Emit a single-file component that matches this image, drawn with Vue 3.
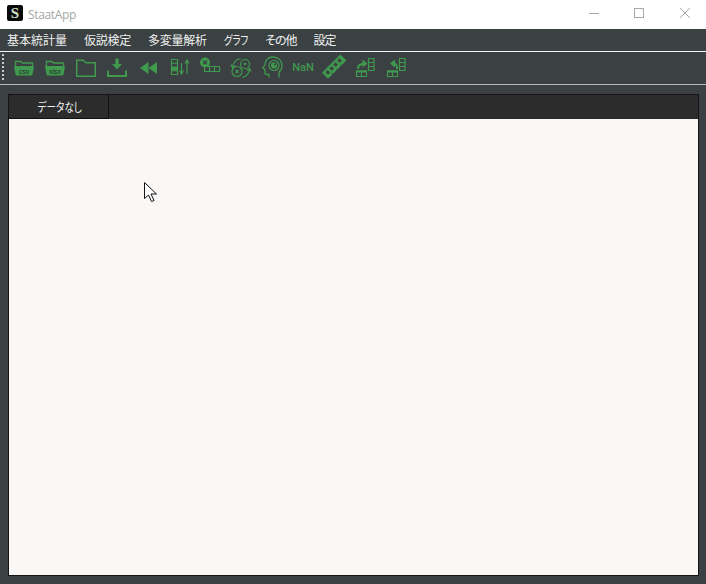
<script setup>
const menus = [
  { label: '基本統計量', cls: '' },
  { label: '仮説検定', cls: 'tight-1' },
  { label: '多変量解析', cls: 'tight-1' },
  { label: 'グラフ', cls: 'narrow' },
  { label: 'その他', cls: 'tight-2' },
  { label: '設定', cls: 'tight-2' },
]
</script>

<template>
  <div class="window">
    <header class="titlebar">
      <div class="app-logo">S</div>
      <span class="app-title">StaatApp</span>
      <div class="controls">
        <svg class="ctl" width="45" height="29" viewBox="0 0 45 29"><path d="M18 13.500h10" /></svg>
        <svg class="ctl" width="46" height="29" viewBox="0 0 46 29"><rect x="18.500" y="8.500" width="9" height="9" /></svg>
        <svg class="ctl" width="46" height="29" viewBox="0 0 46 29"><path d="M18 8l10 10M28 8L18 18" /></svg>
      </div>
    </header>

    <nav class="menubar">
      <span v-for="m in menus" :key="m.label" class="menu" :class="m.cls">{{ m.label }}</span>
    </nav>

    <div class="toolbar">
      <div class="grip"><i v-for="n in 7" :key="n"></i></div>
      <div class="tools">
        <div class="tool">
          <svg width="24" height="24" viewBox="0 0 24 24"><path class="s" d="M3.500 11V5.500H9L10.500 7H20.500v4"/><path class="f" d="M2 10h20l-1.500 8.500q-.2 1-1.200 1H4.700q-1 0-1.200-1z"/><text x="12" y="17.500" class="lbl">csv</text></svg>
        </div>
        <div class="tool">
          <svg width="24" height="24" viewBox="0 0 24 24"><path class="s" d="M3.500 11V5.500H9L10.500 7H20.500v4"/><path class="f" d="M2 10h20l-1.500 8.500q-.2 1-1.200 1H4.700q-1 0-1.200-1z"/><text x="12" y="17.500" class="lbl">xlsx</text></svg>
        </div>
        <div class="tool">
          <svg width="24" height="24" viewBox="0 0 24 24"><path class="s3" d="M2.750 4.250h6.500l2.500 2.500h9.500v13.500h-18.500z"/></svg>
        </div>
        <div class="tool">
          <svg width="24" height="24" viewBox="0 0 24 24"><path class="f" d="M10.300 2.500h3.400V8H17l-5 5.500L7 8h3.300z"/><path class="s2" d="M3 15.500V20h18v-4.500" stroke-linecap="square"/></svg>
        </div>
        <div class="tool">
          <svg width="24" height="24" viewBox="0 0 24 24"><path class="f" d="M12.500 6v12L4 12zM21 6v12l-8.500-6z"/></svg>
        </div>
        <div class="tool">
          <svg width="24" height="24" viewBox="0 0 24 24"><path class="s1" d="M4.500 3.500h6v15h-6zM4.500 7.250h6M4.500 11h6M4.500 14.750h6"/><path class="f" d="M5 11h5v3.500H5z"/><path class="s1" d="M14.500 7v11M12.500 14.500l2 3.500 2-3.500M20 18V4M18 7.500L20 4l2 3.500"/></svg>
        </div>
        <div class="tool">
          <svg width="24" height="24" viewBox="0 0 24 24"><circle class="f" cx="7" cy="6.500" r="5"/><path class="x" d="M5.200 4.700l3.600 3.600M8.800 4.700L5.200 8.300"/><path class="s1" d="M6.500 10.500h15v5h-15zM11.500 10.500v5M16.500 10.500v5"/></svg>
        </div>
        <div class="tool">
          <svg width="24" height="24" viewBox="0 0 24 24"><circle class="s1" cx="8" cy="15.500" r="5"/><circle class="s1" cx="16" cy="8" r="4.500"/><path class="s1" d="M3.500 11.500A9.500 9.500 0 0 1 11.500 2.500M20.500 13A9.500 9.500 0 0 1 13 21.500"/><path class="s1" d="M2 8.500l1.500 3 3-2M22 15.500l-1.500-3-3 2"/><path class="s1" d="M6.500 14l3 3M9.500 14l-3 3M15 7l2 2M17 7l-2 2"/></svg>
        </div>
        <div class="tool">
          <svg width="24" height="24" viewBox="0 0 24 24"><path class="s" d="M19 21.500V16c2-1.500 3-4 3-6.500C22 4.500 18 1 13 1 8 1 5 4.500 5 8.500L3 12l2 1.500v3c0 1.500 1 2 2 2h2v3"/><circle class="s1" cx="14" cy="9.500" r="5"/><circle class="f" cx="14" cy="9.500" r="3"/><circle class="cut" cx="15" cy="8.500" r="1"/></svg>
        </div>
        <div class="tool">
          <span class="nan">NaN</span>
        </div>
        <div class="tool">
          <svg width="24" height="24" viewBox="0 0 24 24"><g transform="rotate(-45 12 10.500)"><path class="f" d="M-1 6.500h26v8.500H-1z"/><path class="cut" d="M2 8.500h3v3.500H2zM7.500 8.500h3v3.500h-3zM13 8.500h3v3.500h-3zM18.500 8.500h3v3.500h-3z"/><path class="cut" d="M5.500 14h1v1H5.500zM11.500 14h1v1h-1zM17.500 14h1v1h-1z"/></g></svg>
        </div>
        <div class="tool">
          <svg width="24" height="24" viewBox="0 0 24 24"><path class="s1" d="M15.500 2.500h5.500v12h-5.500zM15.500 6.500h5.500M15.500 10.500h5.500"/><path class="f" d="M3 14.500h11v2H3z"/><path class="s1" d="M3.500 15h10v5.500h-10zM8.500 15v5.500"/><path class="f" d="M4 13c0-3 1.500-5.500 5.500-6V3.500l5 4-5 4V9C7 9.500 6 11 6 13z"/></svg>
        </div>
        <div class="tool">
          <svg width="24" height="24" viewBox="0 0 24 24"><path class="s1" d="M15.500 2.500h5.500v12h-5.500zM15.500 6.500h5.500M15.500 10.500h5.500"/><path class="f" d="M3 14.500h11v2H3z"/><path class="s1" d="M3.500 15h10v5.500h-10zM8.500 15v5.500"/><path class="f" d="M14 13c0-3-.5-5.500-3-6V3.500l-5 4 5 4V9c1 .5 1 2 1 4z"/></svg>
        </div>
      </div>
    </div>

    <main class="body">
      <section class="tabs">
        <div class="tabbar">
          <div class="tab"><span class="tab-label">データなし</span></div>
        </div>
        <div class="pane"></div>
      </section>
    </main>

    <svg class="cursor" width="14" height="21" viewBox="0 0 14 21">
      <path d="M.5.500v16l4-3.500 3 6.500 2.500-1-3-6.500h5.500z" fill="#fff" stroke="#111" stroke-width="1"/>
    </svg>
  </div>
</template>

<style>
html, body { margin: 0; padding: 0; overflow: hidden; }
</style>

<style scoped>
.window {
  position: relative;
  width: 706px;
  height: 584px;
  display: flex;
  flex-direction: column;
  background: #3b4043;
  font-family: "Noto Sans CJK JP", "Noto Sans", sans-serif;
  font-feature-settings: "palt";
  overflow: hidden;
}
.titlebar {
  height: 29px;
  flex: none;
  background: #fff;
  display: flex;
  align-items: center;
  padding-left: 7px;
}
.app-logo {
  width: 16px;
  height: 16px;
  margin-bottom: 3px;
  border-radius: 2px;
  background: #0a0a0a;
  color: #cfe0c8;
  font: 700 15px/16px "Liberation Serif", serif;
  text-align: center;
}
.app-title {
  margin-left: 5px;
  font: 12px/16px "Open Sans", sans-serif;
  letter-spacing: -0.350px;
  color: #a4a8a4;
}
.controls { margin-left: auto; margin-right: -2px; display: flex; }
.ctl { display: block; fill: none; stroke: #a3aba3; stroke-width: 1; }
.menubar {
  height: 22px;
  flex: none;
  box-sizing: border-box;
  display: flex;
  align-items: center;
  padding-left: 7px;
  gap: 17px;
}
.menu {
  font-size: 12px;
  line-height: 22px;
  color: #eef0ee;
  white-space: nowrap;
}
.tight-1 { letter-spacing: -0.250px; }
.tight-2 { letter-spacing: -1px; }
.narrow {
  transform: scaleX(0.780);
  transform-origin: left center;
  margin-right: -7px;
}
.toolbar {
  height: 34px;
  flex: none;
  box-sizing: border-box;
  border-top: 1px solid #f4f4f4;
  border-bottom: 1px solid #b4b8b4;
  display: flex;
  align-items: center;
  padding-left: 2px;
}
.grip {
  width: 2px;
  display: flex;
  flex-direction: column;
  gap: 2px;
  margin-bottom: 3px;
}
.grip i { display: block; width: 2px; height: 2px; background: #c8ccc8; }
.tools { display: flex; margin-left: 4.500px; }
.tool {
  width: 31px;
  height: 24px;
  display: flex;
  align-items: center;
  justify-content: center;
}
.tool svg { display: block; overflow: visible; }
.s { fill: none; stroke: #3f9a4e; stroke-width: 1.300; }
.s1 { fill: none; stroke: #3f9a4e; stroke-width: 1.200; }
.s2 { fill: none; stroke: #3f9a4e; stroke-width: 2; }
.s3 { fill: none; stroke: #3f9a4e; stroke-width: 1.500; }
.f { fill: #3f9a4e; }
.x { fill: none; stroke: #3b4043; stroke-width: 1.300; }
.cut { fill: #3b4043; }
.lbl {
  font: 7px "Liberation Sans", sans-serif;
  fill: #23282a;
  text-anchor: middle;
}
.nan {
  font: 500 11px/24px Roboto, sans-serif;
  color: #3f9a4e;
}
.body {
  flex: 1;
  min-height: 0;
  padding: 9px 7px 8px 8px;
  display: flex;
}
.tabs {
  flex: 1;
  display: flex;
  flex-direction: column;
  border: 1px solid #141414;
  min-width: 0;
}
.tabbar {
  height: 24px;
  flex: none;
  background: #2c2c2c;
  display: flex;
}
.tab {
  width: 100px;
  box-sizing: border-box;
  padding-left: 2px;
  border-right: 1px solid #111;
  border-bottom: 1px solid #111;
  background: #2c2c2c;
  color: #eef0ee;
  font-size: 12px;
  line-height: 24px;
  text-align: center;
}
.tab-label {
  display: inline-block;
  transform: scaleX(0.800);
}
.pane { flex: 1; background: #f9f8f6; }
.cursor { position: absolute; left: 144px; top: 182px; }
</style>
